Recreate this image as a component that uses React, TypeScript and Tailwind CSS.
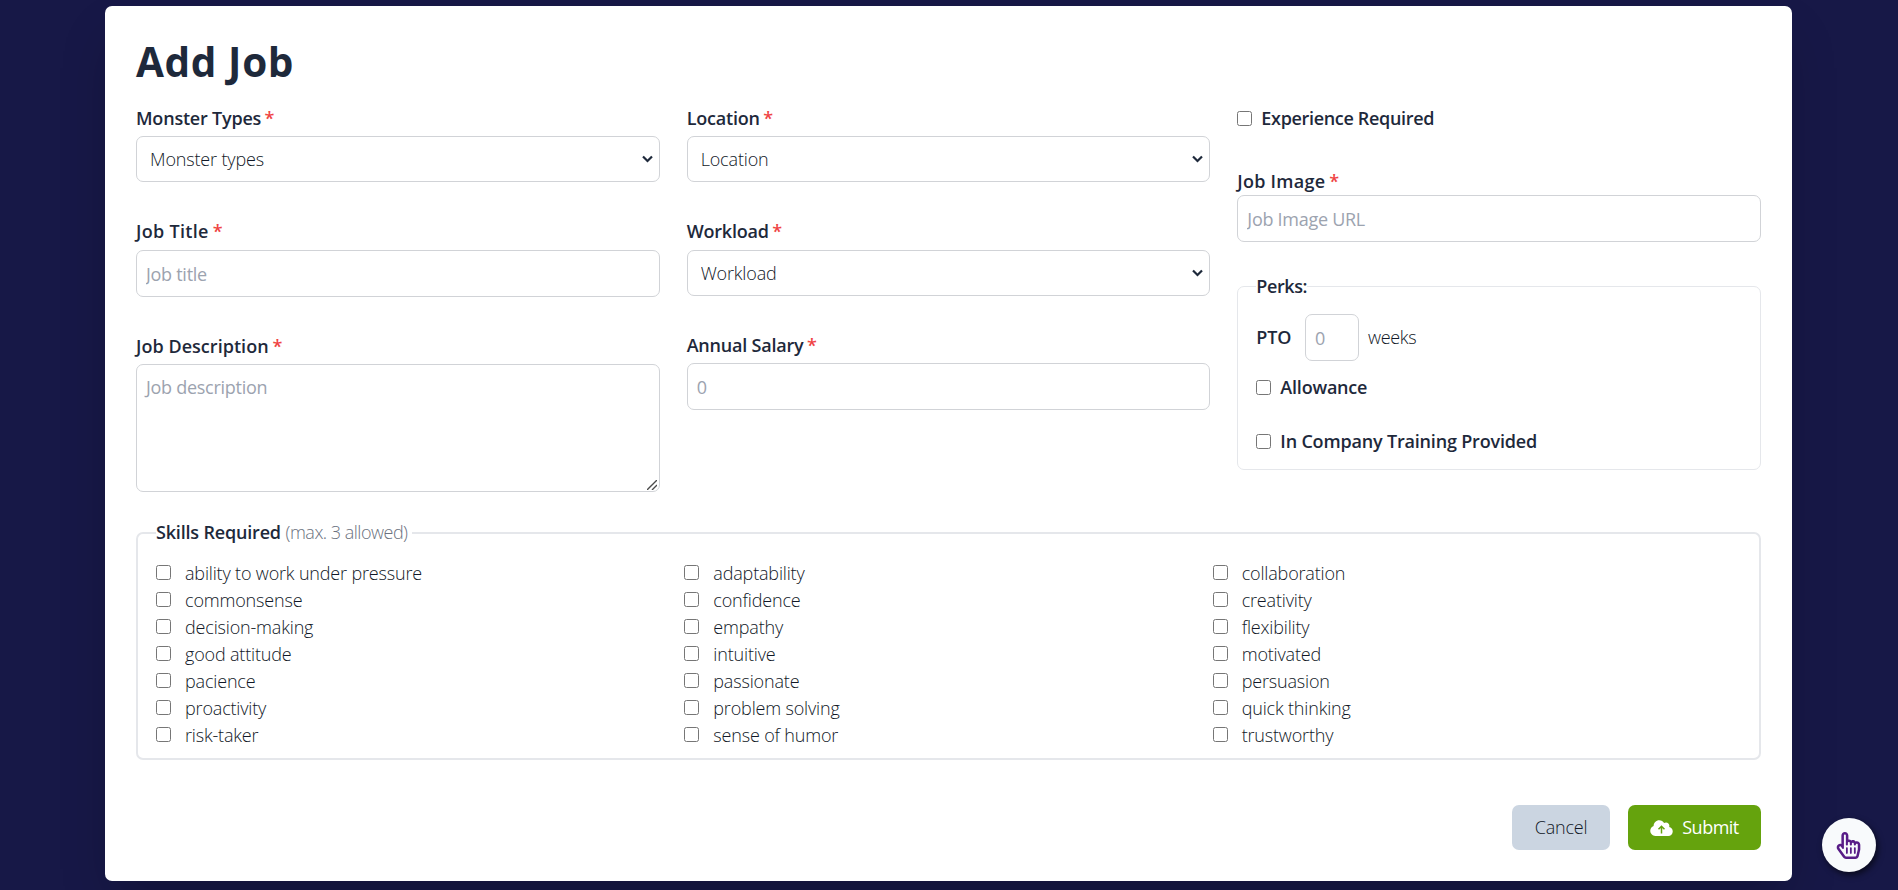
import type { ReactNode } from "react";
import { FaRegHandPointer } from "react-icons/fa";

const SKILLS = [
  "ability to work under pressure", "adaptability", "collaboration",
  "commonsense", "confidence", "creativity",
  "decision-making", "empathy", "flexibility",
  "good attitude", "intuitive", "motivated",
  "pacience", "passionate", "persuasion",
  "proactivity", "problem solving", "quick thinking",
  "risk-taker", "sense of humor", "trustworthy",
];

const LABEL = "font-semibold leading-[27px]";
const FIELD =
  "block w-full rounded-[7px] border border-[#d1d3d7] bg-white px-[9px] text-[18px] leading-[27px] tracking-[-0.28px] placeholder:text-[#9ca3af]";

function Label({
  children,
  required = false,
  tracking = "tracking-[-0.21px]",
}: {
  children: ReactNode;
  required?: boolean;
  tracking?: string;
}) {
  return (
    <span className={`${LABEL} ${tracking} block`}>
      {children}
      {required && <span className="ml-[-1px] text-[#ef4444]"> *</span>}
    </span>
  );
}

function Select({ name }: { name: string }) {
  return (
    <div className="relative">
      <select className="block h-[46px] w-full appearance-none rounded-[7px] border border-[#d1d3d7] bg-white px-[13px] text-[18px] font-light tracking-[-0.16px] text-[#111827]">
        <option>{name}</option>
      </select>
      <svg className="pointer-events-none absolute right-[7px] top-[19px] h-[8px] w-[11px]" viewBox="0 0 11 8" fill="none" stroke="#1e293b" strokeWidth="2.2">
        <path d="M1 1.5 5.5 6 10 1.5" />
      </svg>
    </div>
  );
}

function Check({ className = "" }: { className?: string }) {
  return <input type="checkbox" className={`size-[15px] shrink-0 ${className}`} />;
}

function CloudUpload() {
  return (
    <svg className="h-[18px] w-[23px]" viewBox="0 0 640 512">
      <path
        fill="#fff"
        d="M537.6 226.6c4.1-10.7 6.4-22.4 6.4-34.6 0-53-43-96-96-96-19.7 0-38.1 6-53.3 16.2C367 64.2 315.3 32 256 32c-88.4 0-160 71.6-160 160 0 2.7.1 5.4.2 8.1C40.2 219.8 0 273.2 0 336c0 79.5 64.5 144 144 144h368c70.7 0 128-57.3 128-128 0-61.9-44-113.6-102.4-125.4z"
      />
      <path d="M320 410V215M235 292l85-85 85 85" fill="none" stroke="#65a30d" strokeWidth="42" />
    </svg>
  );
}

export default function App() {
  return (
    <div className="flex h-[890px] w-full overflow-hidden bg-[#171847] px-[105px] pt-[6px] font-['Open_Sans','Liberation_Sans',sans-serif] text-[18px] leading-[27px] text-[#1e293b]">
      <form className="h-[875px] w-[1687px] rounded-[7px] bg-white px-[31px] shadow-2xl">
        <h1 className="pt-[33px] text-[40.5px] font-bold leading-[45px] tracking-[0.6px]">Add Job</h1>

        <div className="mt-[21px] grid grid-cols-3 gap-x-[27px]">
          <div className="flex flex-col">
            <Label required>Monster Types</Label>
            <div className="mt-[4px]"><Select name="Monster types" /></div>
            <div className="mt-[36px]"><Label required tracking="tracking-[0.3px]">Job Title</Label></div>
            <input className={`${FIELD} mt-[5px] h-[47px]`} placeholder="Job title" />
            <div className="mt-[36px]"><Label required tracking="tracking-[0.04px]">Job Description</Label></div>
            <div className="relative mt-[4px]">
              <textarea className={`${FIELD} h-[128px] resize-none py-[9px]`} placeholder="Job description" />
              <svg className="pointer-events-none absolute bottom-[2px] right-[3px] size-[10px]" viewBox="0 0 10 10" stroke="#4b4b4b" strokeWidth="1.4">
                <path d="M0 10 10 0M5 10l5-5" />
              </svg>
            </div>
          </div>

          <div className="flex flex-col">
            <Label required tracking="tracking-[-0.2px]">Location</Label>
            <div className="mt-[4px]"><Select name="Location" /></div>
            <div className="mt-[36px]"><Label required>Workload</Label></div>
            <div className="mt-[5px]"><Select name="Workload" /></div>
            <div className="mt-[36px]"><Label required>Annual Salary</Label></div>
            <input className={`${FIELD} mt-[4px] h-[47px]`} placeholder="0" />
          </div>

          <div className="flex flex-col">
            <label className="flex items-center gap-[9px]">
              <Check />
              <Label tracking="tracking-[-0.33px]">Experience Required</Label>
            </label>
            <div className="mt-[36px]"><Label required tracking="tracking-[0.25px]">Job Image</Label></div>
            <input className={`${FIELD} h-[47px]`} placeholder="Job Image URL" />
            <fieldset className="mt-[31px] h-[197px] rounded-[7px] border border-[#e5e7eb] px-[18px]">
              <legend className={`${LABEL} tracking-[-0.4px]`}>Perks:</legend>
              <div className="mt-[14px] flex items-center">
                <span className={`${LABEL} tracking-[-0.21px]`}>PTO</span>
                <div className="ml-[14px] w-[54px]">
                  <input className={`${FIELD} h-[47px]`} placeholder="0" />
                </div>
                <span className="ml-[9px] font-light tracking-[-0.36px] text-[#111827]">weeks</span>
              </div>
              <label className="mt-[13px] flex items-center gap-[9px]">
                <Check />
                <Label>Allowance</Label>
              </label>
              <label className="mt-[27px] flex items-center gap-[9px]">
                <Check />
                <Label tracking="tracking-[-0.18px]">In Company Training Provided</Label>
              </label>
            </fieldset>
          </div>
        </div>

        <fieldset className="mt-[27px] h-[241px] rounded-[7px] border-2 border-[#e5e7eb] px-[18px]">
          <legend className="pr-[4px]">
            <span className={`${LABEL} tracking-[-0.18px]`}>Skills Required</span>{" "}
            <span className="font-light tracking-[-0.5px] text-[#6b7280]">(max. 3 allowed)</span>
          </legend>
          <div className="mt-[14px] grid grid-cols-3">
            {SKILLS.map((skill) => (
              <label key={skill} className="flex h-[27px] items-center font-light tracking-[-0.17px] text-[#111827]">
                <Check className="mr-[14px] -mt-[2px]" />
                {skill}
              </label>
            ))}
          </div>
        </fieldset>

        <div className="mt-[45px] flex justify-end gap-[18px]">
          <button type="button" className="h-[45px] w-[98px] rounded-[7px] bg-[#cbd5e1] font-light tracking-[-0.2px] text-[#111827]">
            Cancel
          </button>
          <button type="button" className="flex h-[45px] w-[133px] items-center justify-center gap-[9px] rounded-[7px] bg-[#65a30d] tracking-[-0.5px] text-white">
            <CloudUpload />
            Submit
          </button>
        </div>
      </form>

      <div className="fixed bottom-[18px] right-[22px] flex size-[54px] items-center justify-center rounded-full bg-[#f8fafc] pr-[2px] shadow-[2px_3px_6px_rgba(0,0,0,0.6)]">
        <FaRegHandPointer className="size-[27px] text-[#581c87]" />
      </div>
    </div>
  );
}
